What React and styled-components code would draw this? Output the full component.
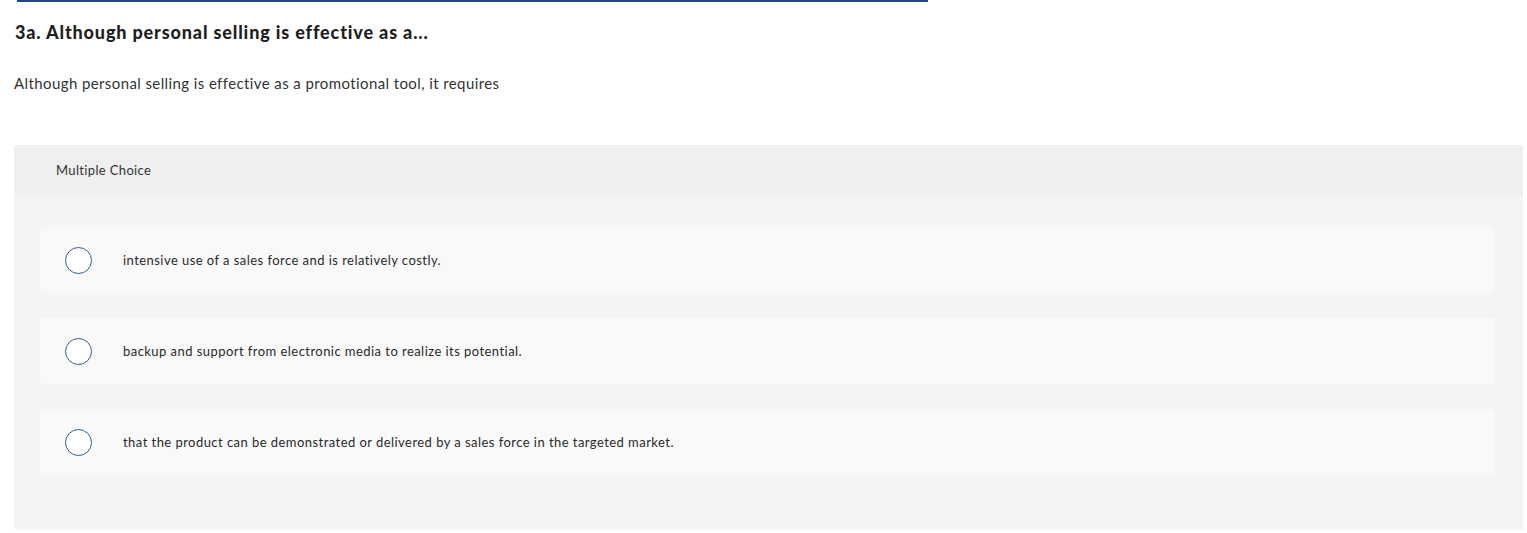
import React from "react";
import styled, { createGlobalStyle } from "styled-components";

const GlobalStyle = createGlobalStyle`
  body {
    margin: 0;
    background: #ffffff;
    font-family: Lato, "Open Sans", sans-serif;
    color: #222222;
  }
`;

const Page = styled.div`
  width: 1527px;
  padding: 0 4px 0 14px;
  box-sizing: border-box;
`;

const TopRule = styled.div`
  width: 911px;
  height: 2px;
  margin-left: 3px;
  background: #1a4b85;
`;

const Title = styled.h1`
  margin: 18px 0 0 1px;
  font-size: 18px;
  line-height: 24px;
  font-weight: 900;
  color: #1f1f1f;
  letter-spacing: 0.85px;
`;

const Prompt = styled.p`
  margin: 29px 0 0 0;
  font-size: 15px;
  line-height: 20px;
  color: #333333;
  letter-spacing: 0.4px;
`;

const Card = styled.section`
  margin-top: 52px;
  background: #f4f4f4;
  border-radius: 3px;
  overflow: hidden;
`;

const CardHeader = styled.div`
  height: 50px;
  display: flex;
  align-items: center;
  padding-left: 42px;
  background: #efefef;
  font-size: 13px;
  color: #333333;
  letter-spacing: 0.35px;
`;

const Options = styled.div`
  display: flex;
  flex-direction: column;
  gap: 25px;
  padding: 32px 28px 55px 26px;
`;

const Option = styled.label`
  height: 66px;
  display: flex;
  align-items: center;
  background: #f9f9f9;
  border-radius: 3px;
  padding-left: 25px;
  cursor: pointer;
`;

const Radio = styled.span`
  width: 25px;
  height: 25px;
  border: 1.5px solid #2f5b8b;
  border-radius: 50%;
  background: #ffffff;
  flex-shrink: 0;
`;

const OptionText = styled.span`
  margin-left: 31px;
  font-size: 13px;
  color: #2a2a2a;
  letter-spacing: 0.45px;
`;

const choices = [
  "intensive use of a sales force and is relatively costly.",
  "backup and support from electronic media to realize its potential.",
  "that the product can be demonstrated or delivered by a sales force in the targeted market.",
];

const App = () => {
  return (
    <Page>
      <GlobalStyle />
      <TopRule />
      <Title>3a. Although personal selling is effective as a...</Title>
      <Prompt>Although personal selling is effective as a promotional tool, it requires</Prompt>
      <Card>
        <CardHeader>Multiple Choice</CardHeader>
        <Options>
          {choices.map((text) => (
            <Option key={text}>
              <Radio />
              <OptionText>{text}</OptionText>
            </Option>
          ))}
        </Options>
      </Card>
    </Page>
  );
};

export default App;
